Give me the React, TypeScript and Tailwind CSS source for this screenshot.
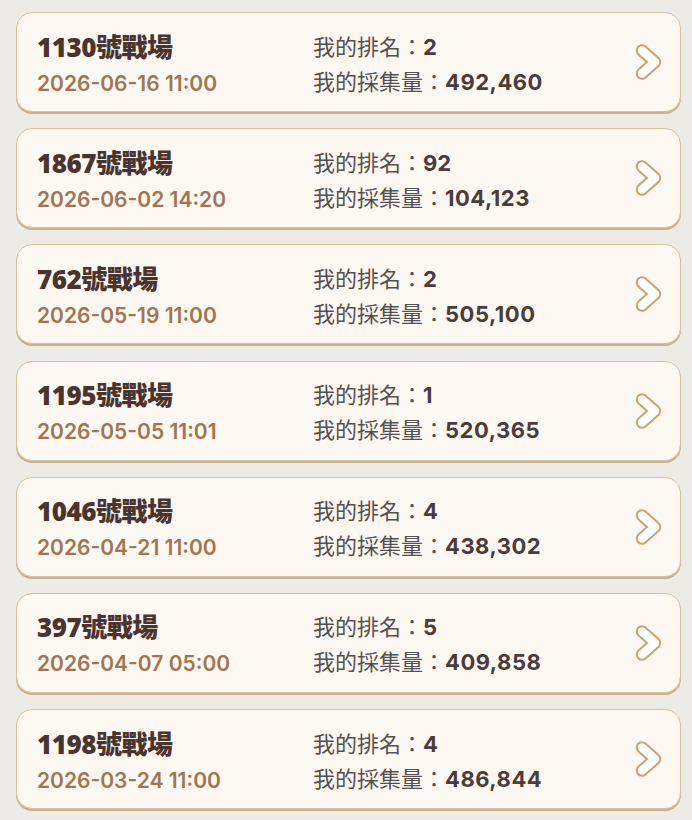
import React from 'react';

interface Battle {
  id: string;
  date: string;
  rank: number;
  amount: string;
}

const battles: Battle[] = [
  { id: '1130', date: '2026-06-16 11:00', rank: 2, amount: '492,460' },
  { id: '1867', date: '2026-06-02 14:20', rank: 92, amount: '104,123' },
  { id: '762', date: '2026-05-19 11:00', rank: 2, amount: '505,100' },
  { id: '1195', date: '2026-05-05 11:01', rank: 1, amount: '520,365' },
  { id: '1046', date: '2026-04-21 11:00', rank: 4, amount: '438,302' },
  { id: '397', date: '2026-04-07 05:00', rank: 5, amount: '409,858' },
  { id: '1198', date: '2026-03-24 11:00', rank: 4, amount: '486,844' }
];

const Chevron = () => (
  <svg width="32" height="38" viewBox="0 0 32 38" fill="none">
    <polyline points="10,7.5 23,19 10,30.5" stroke="#c7a27a" strokeWidth="12.5" strokeLinecap="round" strokeLinejoin="round" />
    <polyline points="10,7.5 23,19 10,30.5" stroke="#ffffff" strokeWidth="8.5" strokeLinecap="round" strokeLinejoin="round" />
  </svg>
);

const BattleCard: React.FC<{ battle: Battle }> = ({ battle }) => (
  <div className="flex items-center h-[100px] rounded-[16px] border-[1.5px] border-[#d6c1a3] bg-[#fdf8f2] shadow-[0_2px_0_#c9b08e] pl-5 pr-[16px]">
    <div className="w-[276px] flex flex-col pt-[6px]">
      <div className="text-[26px] leading-[34px] font-extrabold text-[#4a3430] tracking-[-0.5px]">
        {battle.id}號戰場
      </div>
      <div
        className="text-[21px] leading-[34px] mt-[3px] font-semibold text-[#a07650]"
        style={{ fontFamily: 'Inter, "Noto Sans CJK TC", sans-serif' }}
      >
        {battle.date}
      </div>
    </div>
    <div className="flex-1 flex flex-col text-[22px] text-[#555050] pt-[3px]">
      <div className="leading-[34px]">
        我的排名：<span className="font-bold text-[#4a3c3a]" style={{ fontFamily: 'Inter, sans-serif' }}>{battle.rank}</span>
      </div>
      <div className="leading-[34px]">
        我的採集量：<span className="font-bold text-[#4a3c3a] tracking-[0.5px]" style={{ fontFamily: 'Inter, sans-serif' }}>{battle.amount}</span>
      </div>
    </div>
    <Chevron />
  </div>
);

export default function App() {
  return (
    <div
      className="min-h-[820px] bg-[#ecebe5] pt-3 pl-4 pr-[11px] flex flex-col gap-[16.2px]"
      style={{ fontFamily: '"Open Sans", "Noto Sans CJK TC", sans-serif' }}
    >
      {battles.map((b) => (
        <BattleCard key={b.id} battle={b} />
      ))}
    </div>
  );
}
